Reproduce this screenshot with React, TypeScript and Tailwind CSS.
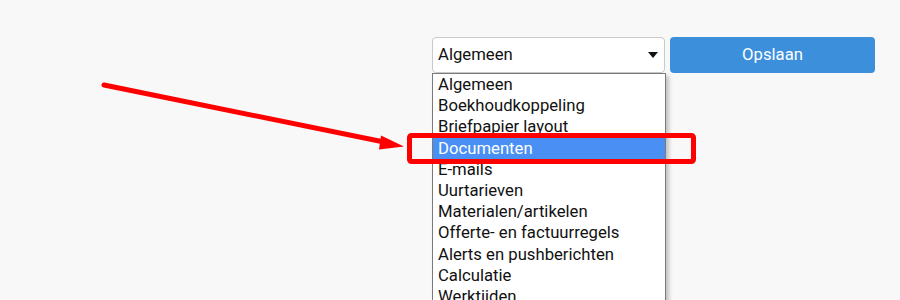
import React from "react";

const items = [
  "Algemeen",
  "Boekhoudkoppeling",
  "Briefpapier layout",
  "Documenten",
  "E-mails",
  "Uurtarieven",
  "Materialen/artikelen",
  "Offerte- en factuurregels",
  "Alerts en pushberichten",
  "Calculatie",
  "Werktijden",
  "Overig",
];

export default function App() {
  return (
    <div
      className="relative h-[300px] w-[900px] overflow-hidden bg-[#f8f8f8] text-[16.7px] text-[#111]"
      style={{ fontFamily: "Roboto, 'Liberation Sans', sans-serif" }}
    >
      <div className="flex justify-end gap-[5px] pr-[25px] pt-[37px]">
        <div className="relative w-[233px]">
          <div className="flex h-[36px] items-center justify-between rounded-[4px] border border-[#c9c9c9] bg-white pl-[5px] pr-[6px]">
            <span>Algemeen</span>
            <svg width="10" height="6" viewBox="0 0 10 6">
              <polygon points="0,0 10,0 5,6" fill="#111" />
            </svg>
          </div>
          <div className="absolute left-0 top-[36px] w-[234px] border border-[#7a7a7a] bg-white shadow-[3px_3px_4px_rgba(0,0,0,0.22)]">
            {items.map((it) => (
              <div
                key={it}
                className={
                  "h-[21.2px] pl-[5px] leading-[21.2px] whitespace-nowrap " +
                  (it === "Documenten" ? "bg-[#4a8ff3] text-white" : "")
                }
              >
                {it}
              </div>
            ))}
          </div>
        </div>
        <button className="h-[36px] w-[205px] rounded-[4px] bg-[#3b8fdb] text-white">
          Opslaan
        </button>
      </div>

      <svg
        className="pointer-events-none absolute left-0 top-0"
        width="900"
        height="300"
        viewBox="0 0 900 300"
      >
        <line
          x1="104"
          y1="85"
          x2="384"
          y2="142"
          stroke="#ff0000"
          strokeWidth="5"
          strokeLinecap="round"
        />
        <polygon points="381,135.5 404,146.5 379,149.5" fill="#ff0000" />
        <rect
          x="409.5"
          y="135.5"
          width="284"
          height="26"
          rx="2"
          fill="none"
          stroke="#ff0000"
          strokeWidth="5"
        />
      </svg>
    </div>
  );
}
